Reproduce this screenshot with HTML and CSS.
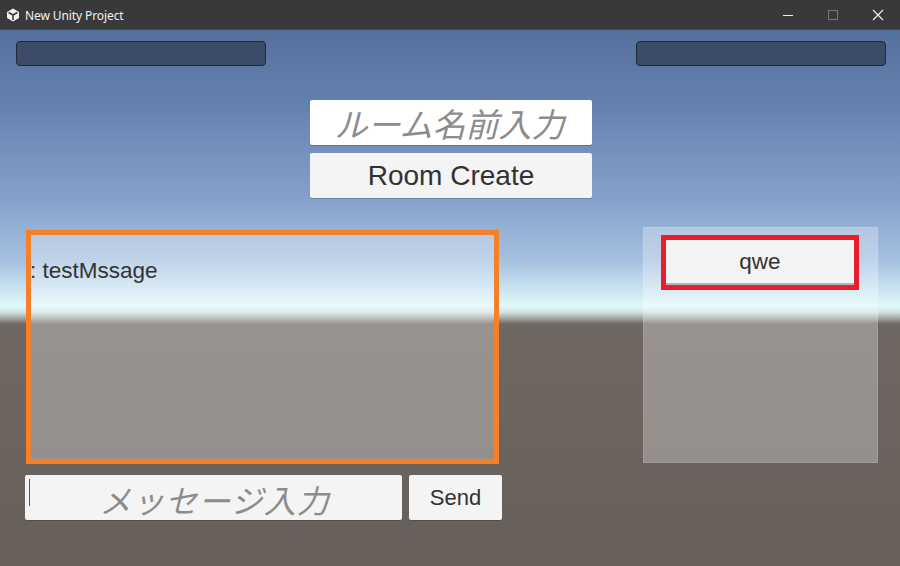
FILE: index.html
```html
<!DOCTYPE html>
<html lang="ja">
<head>
<meta charset="utf-8">
<title>New Unity Project</title>
<link rel="stylesheet" href="styles.css">
</head>
<body>
<div class="window">
  <header class="titlebar">
    <div class="title">
      <svg class="logo" width="14" height="14" viewBox="0 0 14 14">
        <polygon points="7,0.5 13,4 13,10 7,13.5 1,10 1,4" fill="#f2f2f2"/>
        <path d="M7 7 L7 12 M7 7 L2.6 4.5 M7 7 L11.4 4.5" stroke="#393939" stroke-width="1.6" fill="none"/>
      </svg>
      <span>New Unity Project</span>
    </div>
    <div class="controls">
      <span class="ctl"><svg width="12" height="12" viewBox="0 0 12 12"><path d="M1 6.5 H11" stroke="#f0f0f0" stroke-width="1"/></svg></span>
      <span class="ctl"><svg width="12" height="12" viewBox="0 0 12 12"><rect x="1.5" y="1.5" width="9" height="9" fill="none" stroke="#777" stroke-width="1"/></svg></span>
      <span class="ctl"><svg width="12" height="12" viewBox="0 0 12 12"><path d="M1 1 L11 11 M11 1 L1 11" stroke="#f0f0f0" stroke-width="1.2"/></svg></span>
    </div>
  </header>
  <main class="scene">
    <div class="top-bars">
      <div class="bar"></div>
      <div class="bar"></div>
    </div>
    <div class="room">
      <div class="field field-room"><span class="placeholder">ルーム名前入力</span></div>
      <div class="btn btn-create">Room Create</div>
    </div>
    <div class="lower">
      <div class="chat-col">
        <div class="chat-panel">
          <p class="msg">: testMssage</p>
        </div>
        <div class="send-row">
          <div class="field field-msg"><span class="caret"></span><span class="placeholder">メッセージ入力</span></div>
          <div class="btn btn-send">Send</div>
        </div>
      </div>
      <div class="room-list">
        <div class="selected">
          <div class="btn btn-room">qwe</div>
        </div>
      </div>
    </div>
  </main>
</div>
</body>
</html>
```

FILE: styles.css
```css
html, body {
  margin: 0;
  padding: 0;
}
body {
  width: 900px;
  height: 566px;
  overflow: hidden;
  font-family: "Liberation Sans", Arial, sans-serif;
}
.window {
  display: flex;
  flex-direction: column;
  width: 900px;
  height: 566px;
}
.titlebar {
  height: 30px;
  flex: 0 0 30px;
  background: #393939;
  display: flex;
  align-items: center;
  justify-content: space-between;
  color: #f2f2f2;
  box-shadow: inset 0 -1px 0 #454a52;
}
.title {
  display: flex;
  align-items: center;
  gap: 5px;
  padding-left: 6px;
  font-family: "Noto Sans", "Open Sans", sans-serif;
  font-size: 12px;
  letter-spacing: -0.1px;
}
.logo { display: block; }
.controls {
  display: flex;
  height: 30px;
}
.ctl {
  width: 45px;
  height: 30px;
  display: flex;
  align-items: center;
  justify-content: center;
}
.ctl svg { display: block; }
.scene {
  flex: 1;
  position: relative;
  background: linear-gradient(to bottom,
    #56709c 0px,
    #6380ad 70px,
    #86a2cb 170px,
    #a5c0e0 230px,
    #cde7f3 262px,
    #e2f8fb 276px,
    #d2e4e5 282px,
    #a6a9a7 288px,
    #6e6762 294px,
    #665f5a 536px);
  display: flex;
  flex-direction: column;
}
.top-bars {
  display: flex;
  justify-content: space-between;
  padding: 11px 14px 0 16px;
}
.bar {
  width: 248px;
  height: 23px;
  background: #3c4b68;
  border: 1px solid #1e2839;
  border-radius: 4px;
}
.room {
  display: flex;
  flex-direction: column;
  align-items: center;
  gap: 8px;
  margin-top: 34px;
  padding-left: 2px;
}
.field {
  position: relative;
  display: flex;
  align-items: center;
  justify-content: center;
  border-radius: 2px;
  box-shadow: 0 1px 0 rgba(0,0,0,0.18);
}
.placeholder {
  font-family: "Noto Sans CJK JP", "Noto Sans", sans-serif;
  font-style: italic;
  font-weight: 400;
  color: #8c8c8c;
  line-height: 1;
}
.field-room {
  width: 282px;
  height: 45px;
  background: #ffffff;
}
.field-room .placeholder {
  font-size: 33px;
  margin-top: 1px;
  margin-right: 3px;
}
.btn {
  display: flex;
  align-items: center;
  justify-content: center;
  background: #f4f4f4;
  color: #323232;
  border-radius: 2px;
  box-shadow: 0 1px 0 rgba(0,0,0,0.18);
}
.btn-create {
  width: 282px;
  height: 45px;
  font-size: 28px;
  padding-top: 1px;
  box-sizing: border-box;
}
.lower {
  display: flex;
  justify-content: space-between;
  align-items: flex-start;
  margin-top: 29px;
  padding: 0 22px 0 25px;
}
.chat-col {
  display: flex;
  flex-direction: column;
  gap: 11px;
  margin-top: 3px;
}
.chat-panel {
  width: 473px;
  height: 234px;
  margin-left: 1px;
  box-sizing: border-box;
  border: 5px solid #f4802a;
  background: rgba(255,255,255,0.29);
}
.msg {
  margin: 23px 0 0 -1px;
  font-size: 22.5px;
  color: #333;
}
.send-row {
  display: flex;
  gap: 7px;
}
.field-msg {
  width: 377px;
  height: 45px;
  background: #f4f4f4;
}
.field-msg .placeholder {
  font-size: 32px;
  letter-spacing: 1px;
  margin-top: 3px;
  margin-left: 2px;
}
.caret {
  position: absolute;
  left: 4px;
  top: 4px;
  width: 1px;
  height: 27px;
  background: #555;
}
.btn-send {
  width: 93px;
  height: 45px;
  font-size: 22px;
  padding-top: 1px;
  box-sizing: border-box;
}
.room-list {
  width: 235px;
  height: 236px;
  box-sizing: border-box;
  background: rgba(255,255,255,0.29);
  border: 1px solid rgba(255,255,255,0.12);
  padding: 7px 0 0 17px;
}
.selected {
  width: 198px;
  height: 55px;
  box-sizing: border-box;
  border: 5px solid #e61f2a;
}
.btn-room {
  height: 43px;
  margin-top: 0;
  font-size: 22.5px;
  border-radius: 0;
  box-shadow: 0 2px 0 rgba(0,0,0,0.2);
}
```
